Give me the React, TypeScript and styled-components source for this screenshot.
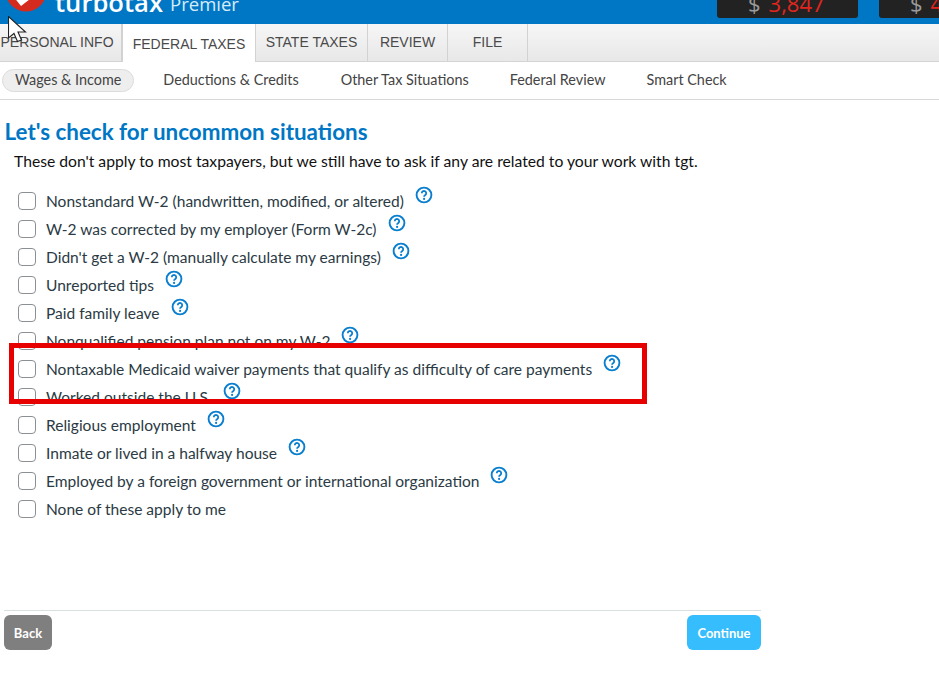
import styled, { createGlobalStyle } from "styled-components";

const GlobalStyle = createGlobalStyle`
  html, body {
    margin: 0;
    padding: 0;
    background: #fff;
  }
  body {
    font-family: Lato, "Liberation Sans", sans-serif;
    color: #2b2f33;
  }
`;

const Page = styled.div`
  position: relative;
  width: 939px;
  height: 691px;
  overflow: hidden;
  background: #fff;
`;

const Header = styled.header`
  height: 24px;
  background: #0077c5;
  display: flex;
  align-items: flex-end;
  overflow: hidden;
  padding-left: 5px;
`;

const LogoMark = styled.svg`
  width: 42px;
  height: 42px;
  margin-bottom: 12px;
  flex: none;
`;

const Wordmark = styled.div`
  font-family: "Open Sans", sans-serif;
  font-size: 25.6px;
  font-weight: 600;
  line-height: 32px;
  color: #fff;
  margin-left: 8px;
  margin-bottom: 5px;
`;

const Edition = styled.span`
  font-family: "Open Sans", sans-serif;
  font-size: 18.5px;
  font-weight: 400;
  line-height: 20px;
  color: #d7ecf8;
  margin-left: 7px;
  margin-bottom: 10px;
`;

const Totals = styled.div`
  margin-left: auto;
  display: flex;
  gap: 21px;
  margin-right: -81px;
  margin-bottom: 6px;
`;

const TotalBox = styled.div`
  width: 141px;
  height: 24px;
  background: #222;
  border-radius: 0 0 3px 3px;
  display: flex;
  align-items: center;
  gap: 8px;
  font-family: "Open Sans", sans-serif;
  font-size: 22px;
  padding: 0 0 6px 31px;
  box-sizing: border-box;
  overflow: hidden;
`;

const Dollar = styled.span`
  color: #9a9a9a;
`;

const Amount = styled.span`
  color: #e0261f;
`;

const TabBar = styled.nav`
  height: 37px;
  display: flex;
  background: linear-gradient(#f6f6f6, #e8e8e8);
  border-bottom: 1px solid #d4d4d4;
`;

const Tab = styled.div<{ $active?: boolean; $width: number; $first?: boolean }>`
  width: ${(p) => p.$width}px;
  flex: none;
  display: flex;
  align-items: center;
  justify-content: center;
  white-space: nowrap;
  box-sizing: border-box;
  height: ${(p) => (p.$active ? "38px" : "37px")};
  font-family: "Liberation Sans", Arial, sans-serif;
  font-size: 14px;
  color: #4a4a4a;
  border-right: 1px solid #d2d2d2;
  background: ${(p) => (p.$active ? "#fff" : "transparent")};
  padding-top: ${(p) => (p.$active ? "1px" : "0")};
  padding-bottom: ${(p) => (p.$active ? "0" : "2px")};
  border-left: ${(p) => (p.$active ? "1px solid #d2d2d2" : "none")};
  margin-left: ${(p) => (p.$first ? "-7px" : "0")};
`;

const SubNav = styled.div`
  height: 37px;
  display: flex;
  align-items: center;
  padding-left: 2px;
  border-bottom: 1px solid #d8d8d8;
  font-size: 14.4px;
  color: #444;
`;

const SubItem = styled.div<{ $active?: boolean; $gap: number }>`
  height: 23px;
  line-height: 20px;
  box-sizing: border-box;
  padding: 0 12px;
  margin-right: ${(p) => p.$gap}px;
  border-radius: 12px;
  white-space: nowrap;
  background: ${(p) => (p.$active ? "#eeeeee" : "transparent")};
  border: 1px solid ${(p) => (p.$active ? "#dcdcdc" : "transparent")};
`;

const Title = styled.h1`
  margin: 18px 0 0 4.5px;
  font-size: 22.4px;
  line-height: 28px;
  font-weight: 700;
  color: #0077c5;
`;

const Intro = styled.p`
  margin: 5px 0 0 14px;
  font-size: 15.7px;
  line-height: 20px;
  color: #111;
`;

const OptionList = styled.ul`
  list-style: none;
  margin: 16px 0 0 18px;
  padding: 0;
`;

const OptionRow = styled.li`
  height: 28px;
  display: flex;
  align-items: center;
`;

const CheckBox = styled.span`
  width: 18px;
  height: 18px;
  flex: none;
  box-sizing: border-box;
  border: 1px solid #8b9094;
  border-radius: 4px;
  background: #fff;
`;

const OptionLabel = styled.span`
  margin-left: 10px;
  font-size: 15.54px;
  line-height: 20px;
  color: #2b3a44;
  white-space: nowrap;
`;

const HelpIcon = styled.svg`
  width: 18px;
  height: 18px;
  flex: none;
  margin-left: 11px;
  margin-top: -12px;
`;

const Callout = styled.div`
  position: absolute;
  left: 9px;
  top: 343px;
  width: 638px;
  height: 61px;
  box-sizing: border-box;
  border: 5px solid #e60000;
`;

const Cursor = styled.svg`
  position: absolute;
  left: 8px;
  top: 16px;
  width: 20px;
  height: 28px;
`;

const Footer = styled.footer`
  position: absolute;
  left: 4px;
  top: 610px;
  width: 757px;
  box-sizing: border-box;
  border-top: 1px solid #d8e0e0;
  padding-top: 4px;
  display: flex;
  justify-content: space-between;
`;

const FooterButton = styled.button<{ $primary?: boolean }>`
  width: ${(p) => (p.$primary ? "74px" : "48px")};
  height: 35px;
  border: none;
  border-radius: 6px;
  padding: 0;
  font-family: Lato, sans-serif;
  font-size: 13px;
  font-weight: 700;
  color: #fff;
  background: ${(p) => (p.$primary ? "#35bdfd" : "#7f7f7f")};
`;

const Help = () => (
  <HelpIcon viewBox="0 0 18 18">
    <circle cx="9" cy="9" r="7.4" fill="none" stroke="#0a7fcf" strokeWidth="1.9" />
    <path d="M6.8 7.2a2.2 2.2 0 1 1 3.5 1.8c-.8.5-1.2.9-1.2 1.7" fill="none" stroke="#0a7fcf" strokeWidth="1.8" />
    <circle cx="9.1" cy="12.9" r="1.1" fill="#0a7fcf" />
  </HelpIcon>
);

const options: { label: string; help: boolean }[] = [
  { label: "Nonstandard W-2 (handwritten, modified, or altered)", help: true },
  { label: "W-2 was corrected by my employer (Form W-2c)", help: true },
  { label: "Didn't get a W-2 (manually calculate my earnings)", help: true },
  { label: "Unreported tips", help: true },
  { label: "Paid family leave", help: true },
  { label: "Nonqualified pension plan not on my W-2", help: true },
  { label: "Nontaxable Medicaid waiver payments that qualify as difficulty of care payments", help: true },
  { label: "Worked outside the U.S.", help: true },
  { label: "Religious employment", help: true },
  { label: "Inmate or lived in a halfway house", help: true },
  { label: "Employed by a foreign government or international organization", help: true },
  { label: "None of these apply to me", help: false },
];

const App = () => (
  <Page>
    <GlobalStyle />
    <Header>
      <LogoMark viewBox="0 0 42 42">
        <circle cx="21" cy="21" r="20.5" fill="#d52b1e" />
        <path d="M8 26 L16 36 L29 26 L29 20 L8 20 Z" fill="#fff" />
      </LogoMark>
      <Wordmark>turbotax</Wordmark>
      <Edition>Premier</Edition>
      <Totals>
        <TotalBox>
          <Dollar>$</Dollar>
          <Amount>3,847</Amount>
        </TotalBox>
        <TotalBox>
          <Dollar>$</Dollar>
          <Amount>4</Amount>
        </TotalBox>
      </Totals>
    </Header>
    <TabBar>
      <Tab $first $width={129}>PERSONAL INFO</Tab>
      <Tab $active $width={134}>FEDERAL TAXES</Tab>
      <Tab $width={112}>STATE TAXES</Tab>
      <Tab $width={80}>REVIEW</Tab>
      <Tab $width={80}>FILE</Tab>
    </TabBar>
    <SubNav>
      <SubItem $active $gap={16}>Wages &amp; Income</SubItem>
      <SubItem $gap={16}>Deductions &amp; Credits</SubItem>
      <SubItem $gap={15}>Other Tax Situations</SubItem>
      <SubItem $gap={15}>Federal Review</SubItem>
      <SubItem $gap={0}>Smart Check</SubItem>
    </SubNav>
    <Title>Let's check for uncommon situations</Title>
    <Intro>These don't apply to most taxpayers, but we still have to ask if any are related to your work with tgt.</Intro>
    <OptionList>
      {options.map((o) => (
        <OptionRow key={o.label}>
          <CheckBox />
          <OptionLabel>{o.label}</OptionLabel>
          {o.help && <Help />}
        </OptionRow>
      ))}
    </OptionList>
    <Callout />
    <Footer>
      <FooterButton>Back</FooterButton>
      <FooterButton $primary>Continue</FooterButton>
    </Footer>
    <Cursor viewBox="0 0 20 28">
      <path d="M.5 .5V22l5.5-4.5 3.5 8 4-1.5-3.5-8h7.5z" fill="#fff" stroke="#222" strokeWidth="1.1" />
    </Cursor>
  </Page>
);

export default App;
